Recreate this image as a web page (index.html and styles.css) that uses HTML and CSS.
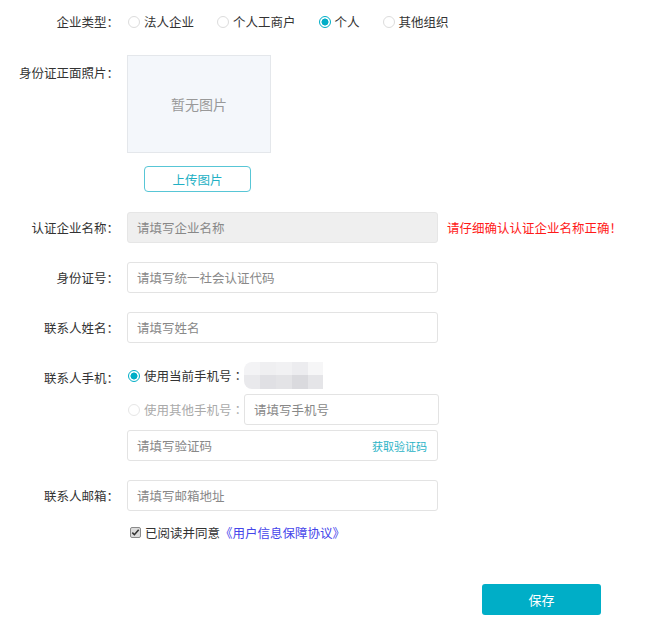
FILE: index.html
```html
<!DOCTYPE html>
<html lang="zh-CN">
<head>
<meta charset="utf-8">
<title>认证</title>
<link rel="stylesheet" href="styles.css">
</head>
<body>
<div class="form">
  <div class="row row-type">
    <div class="label">企业类型<span class="colon">：</span></div>
    <div class="radios">
      <span class="opt"><i class="radio"></i>法人企业</span>
      <span class="opt"><i class="radio"></i>个人工商户</span>
      <span class="opt"><i class="radio on"></i>个人</span>
      <span class="opt"><i class="radio"></i>其他组织</span>
    </div>
  </div>

  <div class="row row-photo">
    <div class="label label-top">身份证正面照片<span class="colon">：</span></div>
    <div class="photo">暂无图片</div>
  </div>
  <div class="upload-wrap"><span class="upload-btn">上传图片</span></div>

  <div class="row row-field first-field">
    <div class="label">认证企业名称<span class="colon">：</span></div>
    <div class="input disabled">请填写企业名称</div>
    <div class="warn">请仔细确认认证企业名称正确<span class="colon">！</span></div>
  </div>

  <div class="row row-field">
    <div class="label">身份证号<span class="colon">：</span></div>
    <div class="input">请填写统一社会认证代码</div>
  </div>

  <div class="row row-field">
    <div class="label">联系人姓名<span class="colon">：</span></div>
    <div class="input">请填写姓名</div>
  </div>

  <div class="row row-phone">
    <div class="label label-phone">联系人手机<span class="colon">：</span></div>
    <div class="phone-box">
      <div class="phone-line">
        <span class="opt strong"><i class="radio on"></i>使用当前手机号<span class="colon">：</span></span>
        <span class="blur">
          <i class="b1"></i><i class="b2"></i><i class="b3"></i><i class="b4"></i><i class="b5"></i>
          <i class="c1"></i><i class="c2"></i><i class="c3"></i><i class="c4"></i><i class="c5"></i>
        </span>
      </div>
      <div class="phone-line line2">
        <span class="opt muted"><i class="radio off"></i>使用其他手机号<span class="colon">：</span></span>
        <div class="input small">请填写手机号</div>
      </div>
      <div class="input code">请填写验证码<span class="get-code">获取验证码</span></div>
    </div>
  </div>

  <div class="row row-field email">
    <div class="label">联系人邮箱<span class="colon">：</span></div>
    <div class="input">请填写邮箱地址</div>
  </div>

  <div class="agree">
    <svg class="check" width="11" height="11" viewBox="0 0 11 11"><rect x="0.5" y="0.5" width="10" height="10" rx="1.5" fill="#dcdcdc" stroke="#8a8a8a"/><path d="M2.3 5.6 L4.4 7.7 L8.7 2.8" fill="none" stroke="#333" stroke-width="1.6"/></svg>
    <span>已阅读并同意</span><span class="link">《用户信息保障协议》</span>
  </div>

  <div class="actions"><span class="save">保存</span></div>
</div>
</body>
</html>
```

FILE: styles.css
```css
* { box-sizing: border-box; }
body {
  margin: 0;
  background: #fff;
  font-family: "Noto Sans CJK SC", "Noto Sans", sans-serif;
  font-size: 12.5px;
  color: #333;
}
.colon { font-family: "Noto Sans CJK TC", "Noto Sans CJK SC", sans-serif; }
.form { padding-top: 12px; }
.row { display: flex; align-items: center; }
.label {
  width: 119px;
  margin-right: 8px;
  flex: none;
  text-align: right;
  color: #333;
  line-height: 20px;
  white-space: nowrap;
}
.row-type { height: 20px; }
.radios { display: flex; align-items: center; }
.opt { display: inline-flex; align-items: center; margin-right: 22px; line-height: 20px; white-space: nowrap; }
.radio {
  width: 12px; height: 12px; border-radius: 50%;
  border: 1px solid #dcdcdc; background: #fff;
  margin-right: 4px; flex: none; margin-left: 1px;
}
.radio.on {
  border: 1px solid #00aec7;
  background: radial-gradient(circle, #00aec7 0 3.2px, #fff 3.8px);
}
.radio.off { border-color: #e6e6e6; }

.row-photo { align-items: flex-start; margin-top: 23px; }
.label-top { padding-top: 8px; }
.photo {
  width: 144px; height: 98px;
  background: #f4f7fb;
  border: 1px solid #e4e7eb;
  display: flex; align-items: center; justify-content: center;
  font-size: 14px; color: #999;
}
.upload-wrap { padding-left: 144px; margin-top: 13px; }
.upload-btn {
  display: inline-flex; align-items: center; justify-content: center;
  width: 107px; height: 26px;
  border: 1px solid #58c6d6; border-radius: 4px;
  color: #22b0c4;
}
.row-field { margin-top: 19px; }
.first-field { margin-top: 20px; }
.input {
  width: 311px; height: 31px;
  border: 1px solid #e3e3e3; border-radius: 3px;
  padding-left: 9px;
  display: flex; align-items: center;
  color: #888;
  background: #fff;
}
.input.disabled { background: #efefef; border-color: #e6e6e6; }
.warn { margin-left: 9px; color: #ff1a1a; white-space: nowrap; }

.row-phone { margin-top: 19px; align-items: flex-start; }
.label-phone { padding-top: 6px; }
.phone-box { display: flex; flex-direction: column; }
.phone-line { display: flex; align-items: center; height: 27px; }
.phone-line .opt { margin-right: 0; }
.strong { color: #333; }
.muted { color: #aaa; }
.line2 { margin-top: 5px; height: 31px; }
.input.small { width: 195px; }
.blur {
  display: grid;
  grid-template-columns: 16px 16px 16px 16px 15px;
  grid-template-rows: 13px 14px;
  width: 79px; height: 27px;
  border-radius: 8px 0 0 8px;
  overflow: hidden;
}
.blur i { display: block; }
.b1 { background: #f3f3f5; } .b2 { background: #efeff1; } .b3 { background: #f1f1f3; } .b4 { background: #ececef; } .b5 { background: #f6f6f7; }
.c1 { background: #e9e9ec; } .c2 { background: #e0e0e4; } .c3 { background: #e3e3e6; } .c4 { background: #dadade; } .c5 { background: #e5e5e8; }
.input.code { margin-top: 5px; justify-content: space-between; padding-right: 10px; }
.get-code { color: #2bb3c6; font-size: 11px; }

.email { margin-top: 19px; }
.agree {
  margin-top: 11px; padding-left: 130px;
  display: flex; align-items: center; height: 20px; color: #333;
}
.check { margin-right: 4px; }
.link { color: #4444ea; }
.actions { padding-left: 482px; margin-top: 42px; }
.save {
  display: inline-flex; align-items: center; justify-content: center;
  width: 119px; height: 31px;
  background: #00aec7; color: #fff; border-radius: 3px;
  font-size: 13px;
}
```
